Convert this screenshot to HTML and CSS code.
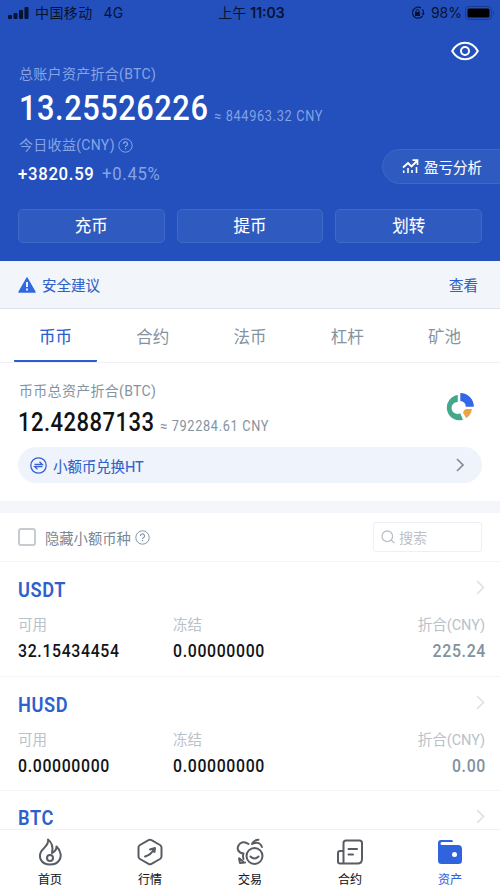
FILE: index.html
```html
<!DOCTYPE html>
<html lang="zh-CN">
<head>
<meta charset="utf-8">
<title>资产</title>
<link rel="stylesheet" href="styles.css">
</head>
<body>
<div class="app">
  <header class="hero">
    <div class="status">
      <div class="carrier">
        <svg width="21" height="13" viewBox="0 0 21 13"><rect x="0" y="8" width="4" height="4" rx="1"/><rect x="5.5" y="6" width="4" height="6" rx="1"/><rect x="11" y="3" width="4" height="9" rx="1"/><rect x="16.5" y="0" width="4" height="12" rx="1"/></svg>
        <span class="operator">中国移动</span><span class="network">4G</span>
      </div>
      <div class="clock">上午 <b>11:03</b></div>
      <div class="power">
        <svg class="lock" width="14" height="14" viewBox="0 0 14 14"><path d="M10 2A5.5 5.5 0 1 0 11.5 9.8M11.5 3.5Q13 5.3 12.4 7.8" fill="none" stroke="#071333" stroke-width="1.2"/><path d="m10.7 7.2 3.2.2-1.8 2z"/><rect x="4" y="6" width="5" height="4" rx=".5"/><path d="M5 6.3V5a1.5 1.5 0 0 1 3 0v1.3" fill="none" stroke="#071333"/></svg>
        <span class="percent">98%</span>
        <svg width="30" height="14" viewBox="0 0 30 14"><rect x=".5" y=".5" width="26" height="13" rx="3.5" fill="none" stroke="#1b3b90"/><rect x="2.5" y="2.5" width="22" height="9" rx="1.5" fill="#000"/><path d="M28 4.5q2 2.5 0 5z" fill="#1b3b90"/></svg>
      </div>
    </div>
    <svg class="eye" width="28" height="20" viewBox="0 0 28 20" fill="none" stroke="#fff" stroke-width="2"><path d="M1.2 10C4 5 8.600 1.700 14 1.700S24 5 26.800 10C24 15 19.400 18.200 14 18.200S4 15 1.200 10z"/><circle cx="14" cy="10" r="4"/></svg>
    <div class="label hero-label">总账户资产折合<span>(BTC)</span></div>
    <div class="hero-total"><span class="big">13.25526226</span><span class="approx">≈ 844963.32 CNY</span></div>
    <div class="label profit-label">今日收益<span>(CNY)</span><svg class="help" width="15" height="15" viewBox="0 0 15 15" fill="none" stroke="currentColor"><circle cx="7.500" cy="7.500" r="6.700"/><path d="M5.500 6a2 2 0 1 1 3 1.700q-1 .5-1 1.300M7.500 10v1.300" stroke-width="1.300"/></svg></div>
    <div class="profit"><span class="gain">+3820.59</span><span class="rate">+0.45%</span></div>
    <a class="analysis"><svg width="17" height="15" viewBox="0 0 17 15" fill="none" stroke="#fff"><path d="M1 8.500 6 4l3.500 3.500L15 2" stroke-width="1.900"/><path d="M10.500 1.200H15.500V6" stroke-width="1.700"/><path d="M1.700 11.500V14M6 9v5M10 11v3M14.500 8v6" stroke-width="1.600"/></svg>盈亏分析</a>
    <nav class="actions"><a>充币</a><a>提币</a><a>划转</a></nav>
  </header>
  <section class="notice">
    <svg width="18" height="16" viewBox="0 0 18 16"><path d="M9 1 17 15H1z" fill="#3267e3" stroke="#3267e3" stroke-width="1.500" stroke-linejoin="round"/><path d="M9 5v5M9 11.500v2" stroke="#fff" stroke-width="1.800"/></svg>
    <span>安全建议</span><a>查看</a>
  </section>
  <nav class="tabs"><a class="active">币币</a><a>合约</a><a>法币</a><a>杠杆</a><a>矿池</a></nav>
  <section class="summary">
    <div class="summary-main">
      <div>
        <div class="label sum-label">币币总资产折合<span>(BTC)</span></div>
        <div class="sum-total"><span class="mid">12.42887133</span><span class="approx">≈ 792284.61 CNY</span></div>
      </div>
      <svg class="donut" width="28" height="28" viewBox="0 0 28 28"><path d="M11.800 2A12.700 12.700 0 1 0 17 26.800L14.200 20.300A6 6 0 1 1 11.800 8.900z" fill="#43a78b"/><path d="M14.300 0A13.500 13.500 0 0 1 27.800 13.700H19.800A6 6 0 0 0 14.300 8z" fill="#3267e8"/><path d="M19.800 16H25.800Q25.500 21.500 20.300 25.300L17 19.800Q17.500 17 19.800 16z" fill="#efa347"/></svg>
    </div>
    <a class="exchange"><svg width="17" height="17" viewBox="0 0 17 17" fill="none" stroke="#3562cf" stroke-width="1.300"><circle cx="8.500" cy="8.500" r="7.700"/><path d="M4.500 7.500H12.300L9.500 4.800M12.500 9.700H4.700L7.500 12.300"/></svg><span>小额币兑换HT</span><svg class="arrow" width="8" height="14" viewBox="0 0 8 14" fill="none" stroke="#858d99" stroke-width="1.700"><path d="m1 1 6 6-6 6"/></svg></a>
  </section>
  <div class="divider"></div>
  <section class="filter">
    <span class="checkbox"></span><span class="hide-small">隐藏小额币种</span><svg width="15" height="15" viewBox="0 0 15 15" fill="none" stroke="#8696a5"><circle cx="7.500" cy="7.500" r="6.700"/><path d="M5.500 6a2 2 0 1 1 3 1.700q-1 .5-1 1.300M7.500 10v1.300" stroke-width="1.200"/></svg>
    <div class="search"><svg width="14" height="14" viewBox="0 0 14 14" fill="none" stroke="#bac1c8" stroke-width="1.300"><circle cx="6.300" cy="6.300" r="5.300"/><path d="m10 10 3.500 3"/></svg>搜索</div>
  </section>
  <main class="coins">
    <article class="coin"><div class="coin-head"><h2>USDT</h2><svg width="9" height="15" viewBox="0 0 9 15"><path d="m1 1 6.500 6.500L1 14"/></svg></div><div class="row names"><span>可用</span><span>冻结</span><span>折合(CNY)</span></div><div class="row values"><span>32.15434454</span><span>0.00000000</span><span>225.24</span></div></article>
    <article class="coin"><div class="coin-head"><h2>HUSD</h2><svg width="9" height="15" viewBox="0 0 9 15"><path d="m1 1 6.500 6.500L1 14"/></svg></div><div class="row names"><span>可用</span><span>冻结</span><span>折合(CNY)</span></div><div class="row values"><span>0.00000000</span><span>0.00000000</span><span>0.00</span></div></article>
    <article class="coin partial"><div class="coin-head"><h2>BTC</h2><svg width="9" height="15" viewBox="0 0 9 15"><path d="m1 1 6.500 6.500L1 14"/></svg></div></article>
  </main>
  <nav class="bottom">
    <a><svg width="28" height="28" viewBox="0 0 28 28"><path d="M12 1.500C13.500 6 8 9.500 5.500 13C2 18.500 4.500 26.500 14 26.500S26 19 24 14Q23 11 20.500 8.500Q20.500 13 16 15Q18 6 12 1.500z"/><circle cx="14" cy="20" r="3"/></svg>首页</a>
    <a><svg width="28" height="28" viewBox="0 0 28 28"><path d="M12.500 2.200Q14 1.300 15.500 2.200L24 7Q25.500 8 25.500 9.500V18.500Q25.500 20 24 21L15.500 25.800Q14 26.700 12.500 25.800L4 21Q2.500 20 2.500 18.500V9.500Q2.500 8 4 7zM9 18.500Q15 17 18.500 10.500M14 11.500 19 10 18.500 14"/></svg>行情</a>
    <a><svg width="28" height="28" viewBox="0 0 28 28"><circle cx="18.500" cy="18" r="8"/><path d="M14.500 18.500q4 4 8 0M7.500 15.500C2.500 15 .5 11 2.500 7.500S8.500 3 12.500 6M16 6Q18 1.800 22.500 1.800M17 5.500Q24 3 26 9M7.500 15.500Q6.500 18 7.500 21M3 20.500 4 25 9 24.500M3.500 20.500 7 23.500"/></svg>交易</a>
    <a><svg width="28" height="28" viewBox="0 0 28 28"><path d="M7.500 25.500V5Q7.500 2.500 10 2.500H23.500Q26 2.500 26 5V21Q26 25.500 21.500 25.500H4Q2 25.500 2 23.500V15Q2 13 4 13H7.500M12.500 11H21M12.500 16.500H17"/></svg>合约</a>
    <a class="selected"><svg width="28" height="28" viewBox="0 0 28 28"><path class="fill" d="M5 2H15.500Q17 2 17 4H6Q4.500 4 4.500 5.500T6 7H22Q26 7 26 11V22.500Q26 26 22.500 26H5.500Q2 26 2 22.500V5Q2 2 5 2z"/><circle class="dot" cx="18.500" cy="16.500" r="2.500"/></svg>资产</a>
  </nav>
</div>
</body>
</html>
```
FILE: styles.css
```css
* { box-sizing: border-box; }
body { margin: 0; background: #fff; font-family: Roboto, "Noto Sans CJK SC", sans-serif; }
svg { display: block; flex: none; }
.app { width: 500px; height: 888px; overflow: hidden; display: flex; flex-direction: column; position: relative; }
.hero { height: 261px; flex: none; background: #2350bc; position: relative; color: #fff; }
.status { height: 26px; padding: 0 5px 0 8px; display: grid; grid-template-columns: 1fr auto 1fr; align-items: center; color: #071333; font: 14px/26px Inter, "Noto Sans CJK SC", sans-serif; }
.status svg { fill: #071333; }
.carrier, .power { display: flex; align-items: center; }
.operator { margin-left: 6px; letter-spacing: .4px; }
.network { margin-left: 11px; }
.clock b { font-weight: 600; font-size: 14px; }
.power { justify-content: flex-end; }
.percent { margin: 0 3px 0 6px; }
.eye { position: absolute; left: 451px; top: 41px; }
.label { font-size: 14px; line-height: 20px; letter-spacing: .3px; }
.hero-label { margin: 38px 0 0 19px; color: #86a4e5; }
.hero-total { height: 46px; margin-top: 2px; padding-left: 19px; display: flex; align-items: baseline; }
.big, .mid, .approx, .gain, .rate, .values span { display: inline-block; transform: scaleX(.88); transform-origin: left; white-space: nowrap; }
.big { width: 195px; font-size: 35px; line-height: 46px; font-weight: 500; letter-spacing: .6px; }
.approx { font-size: 14.500px; color: #83a2e3; letter-spacing: .75px; position: relative; top: 1px; }
.profit-label { margin: 3px 0 0 19px; display: flex; align-items: center; color: #86a4e5; }
.help { margin-left: 3px; }
.profit { height: 32px; margin-left: 18px; display: flex; line-height: 37px; font-size: 19px; letter-spacing: .8px; }
.gain { width: 84px; font-weight: 500; }
.rate { color: #86a4e5; }
.analysis { position: absolute; right: -1px; top: 149px; width: 119px; height: 35px; padding-left: 19px; border: 1px solid #3d67c8; border-radius: 18px 0 0 18px; background: #2f5abf; display: flex; align-items: center; gap: 5px; font-size: 14.500px; -webkit-text-stroke: .1px; }
.actions { margin: 22px 18px 0; display: grid; grid-template-columns: repeat(3, 1fr); gap: 12px; }
.actions a { height: 34px; border: 1px solid #406ac7; border-radius: 5px; background: #2f5abf; text-align: center; font-size: 16.500px; line-height: 34px; -webkit-text-stroke: .1px; }
.notice { height: 48px; flex: none; padding: 0 22px 0 18px; border-bottom: 1px solid #dce3ef; background: #f2f6fb; display: flex; align-items: center; color: #2e5fc9; font-size: 14.500px; -webkit-text-stroke: .1px; }
.notice span { margin-left: 6px; }
.notice a { margin-left: auto; }
.tabs { height: 54px; flex: none; padding: 0 7px; border-bottom: 1px solid #eef1f5; display: grid; grid-template-columns: repeat(5, 1fr); text-align: center; color: #8493a0; font-size: 16.500px; line-height: 58px; }
.tabs a { height: 53px; margin: 0 7px; }
.tabs .active { border-bottom: 2px solid #2c5ec9; color: #2c5ec9; -webkit-text-stroke: .15px; border-radius: 1px; }
.summary { height: 138px; flex: none; padding: 18px 18px 0; }
.summary-main { display: flex; justify-content: space-between; }
.sum-label { color: #8493a0; padding-left: 1px; }
.sum-total { height: 46px; display: flex; align-items: baseline; }
.mid { width: 142px; font-size: 25px; line-height: 43px; font-weight: 500; letter-spacing: .55px; color: #101215; }
.sum-total .approx { color: #8493a0; top: 0; }
.donut { margin: 12px 8px 0 0; }
.exchange { height: 36px; padding: 0 18px 0 12px; border-radius: 18px; background: #eff4fc; display: flex; align-items: center; color: #3060ca; font-size: 14.500px; -webkit-text-stroke: .1px; }
.exchange span { margin-left: 6px; letter-spacing: -.1px; }
.arrow { margin-left: auto; }
.divider { height: 12px; flex: none; background: #f5f6fb; }
.filter { height: 48px; flex: none; padding: 0 18px; display: flex; align-items: center; }
.checkbox { width: 18px; height: 18px; border: 2px solid #c5cbd1; border-radius: 3px; }
.hide-small { margin: 0 4px 0 9px; color: #788896; font-size: 14.300px; }
.search { margin-left: auto; width: 109px; height: 30px; padding-left: 7px; border: 1px solid #edf0f3; border-radius: 3px; display: flex; align-items: center; gap: 4px; color: #bac1c8; font-size: 14px; }
.coins { flex: 1; min-height: 0; overflow: hidden; }
.coin { height: 114.500px; padding: 13px 15px 0 18px; border-top: 1px solid #f2f4f6; }
.partial { height: 54px; }
.coin-head { height: 28px; display: flex; justify-content: space-between; }
.coin-head h2 { margin: 0; font-size: 20px; line-height: 30px; font-weight: 600; color: #2e60cc; letter-spacing: .7px; transform: scaleX(.91); transform-origin: left; }
.partial h2 { line-height: 29px; }
.coin-head svg { margin-top: 5px; fill: none; stroke: #dde1e5; stroke-width: 1.600; }
.row { display: grid; grid-template-columns: 155px 1fr 1fr; }
.row span:last-child { text-align: right; }
.names { margin-top: 12px; height: 23px; line-height: 22px; font-size: 14.500px; color: #b9c1c9; }
.values { height: 26px; line-height: 26px; font-size: 18px; font-weight: 500; letter-spacing: .75px; color: #121518; }
.values span:last-child { color: #8292a0; transform-origin: right; margin-right: -1px; }
.bottom { height: 59px; flex: none; border-top: 1px solid #f0f1f3; padding-top: 8px; background: #fff; display: grid; grid-template-columns: repeat(5, 1fr); }
.bottom a { display: flex; flex-direction: column; align-items: center; font-size: 12px; line-height: 28px; color: #17191c; -webkit-text-stroke: .1px; }
.bottom svg { fill: none; stroke: #585d63; stroke-width: 2; stroke-linecap: round; stroke-linejoin: round; }
.bottom .selected { color: #3064df; }
.bottom .fill { fill: #3064df; stroke: none; }
.bottom .dot { fill: #fff; stroke: none; }
```
